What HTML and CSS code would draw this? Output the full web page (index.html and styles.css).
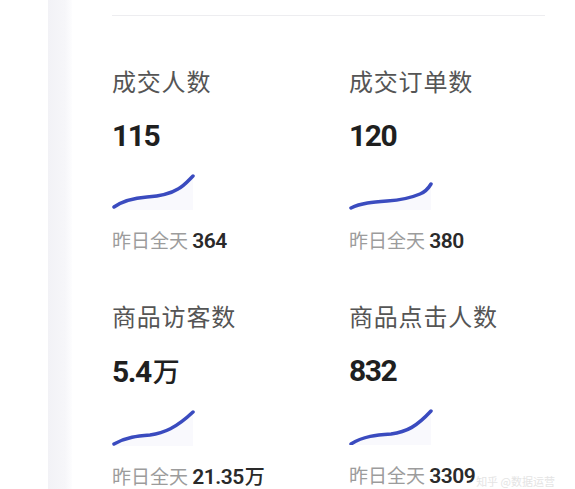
FILE: index.html
```html
<!DOCTYPE html>
<html lang="zh-CN">
<head>
  <meta charset="UTF-8" />
  <meta name="viewport" content="width=device-width, initial-scale=1" />
  <title>数据概览</title>
  <link rel="stylesheet" href="styles.css">
</head>
<body>
  <div class="page">
    <div class="strip"></div>
    <div class="card">
      <div class="divider"></div>

      <div class="grid">
        <div class="metric">
          <div class="label">成交人数</div>
          <div class="value">115</div>
          <svg class="spark" width="84" height="38" viewBox="0 0 84 38">
            <path class="area" d="M2 35 C12 28 22 26 35 25 C48 24 58 22 66 17 C72 14 76 9 81 4 L81 38 L2 38 Z"/>
            <path class="line" d="M2 35 C12 28 22 26 35 25 C48 24 58 22 66 17 C72 14 76 9 81 4"/>
          </svg>
          <div class="footer">昨日全天 <b>364</b></div>
        </div>

        <div class="metric">
          <div class="label">成交订单数</div>
          <div class="value">120</div>
          <svg class="spark" width="84" height="38" viewBox="0 0 84 38">
            <path class="area" d="M2 36 C12 31 24 30 38 29 C52 28 64 25 71 22 C76 20 79 17 82 12 L82 38 L2 38 Z"/>
            <path class="line" d="M2 36 C12 31 24 30 38 29 C52 28 64 25 71 22 C76 20 79 17 82 12"/>
          </svg>
          <div class="footer">昨日全天 <b>380</b></div>
        </div>

        <div class="metric">
          <div class="label">商品访客数</div>
          <div class="value">5.4<span class="unit">万</span></div>
          <svg class="spark" width="84" height="38" viewBox="0 0 84 38">
            <path class="area" d="M2 36 C14 29 26 28 38 27 C52 25 64 20 81 4 L81 38 L2 38 Z"/>
            <path class="line" d="M2 36 C14 29 26 28 38 27 C52 25 64 20 81 4"/>
          </svg>
          <div class="footer">昨日全天 <b>21.35<span class="unit">万</span></b></div>
        </div>

        <div class="metric">
          <div class="label">商品点击人数</div>
          <div class="value">832</div>
          <svg class="spark" width="84" height="38" viewBox="0 0 84 38">
            <path class="area" d="M2 37 C14 29 28 28 42 27 C58 25 68 19 82 4 L82 38 L2 38 Z"/>
            <path class="line" d="M2 37 C14 29 28 28 42 27 C58 25 68 19 82 4"/>
          </svg>
          <div class="footer">昨日全天 <b>3309</b></div>
        </div>
      </div>

      <div class="watermark">知乎 @数据运营</div>
    </div>
  </div>
</body>
</html>
```

FILE: styles.css
```css
body {
  margin: 0;
  background: #fff;
  font-family: "Noto Sans CJK SC", "Noto Sans", sans-serif;
  overflow: hidden;
}
.page {
  display: flex;
  height: 489px;
}
.strip {
  flex-shrink: 0;
  width: 24px;
  margin-left: 48px;
  background: linear-gradient(to right, #f2f2f6, #f6f6f9 70%, #fdfdfe);
}
.card {
  flex: 1;
  min-width: 0;
  padding: 0 30px 0 40px;
  position: relative;
}
.divider {
  margin-top: 15px;
  border-top: 1px solid #ededf0;
}
.grid {
  display: grid;
  grid-template-columns: 237px 1fr;
  row-gap: 45px;
  margin-top: 48px;
}
.metric {
  display: flex;
  flex-direction: column;
  align-items: flex-start;
}
.label {
  font-size: 24px;
  line-height: 34px;
  color: #555;
  letter-spacing: 0.8px;
}
.value {
  margin-top: 20px;
  font-family: Roboto, "Noto Sans CJK SC", sans-serif;
  font-size: 30px;
  line-height: 36px;
  font-weight: 700;
  color: #1f1f1f;
  letter-spacing: -1.5px;
}
.value .unit {
  font-family: "Noto Sans CJK SC", sans-serif;
  font-weight: 500;
  font-size: 27px;
  margin-left: 2px;
}
.spark {
  display: block;
  margin-top: 18px;
}
.spark .line {
  fill: none;
  stroke: #3a4bbf;
  stroke-width: 3.5;
  stroke-linecap: round;
}
.spark .area {
  fill: #f3f4fb;
  opacity: 0.5;
}
.footer {
  margin-top: 17px;
  font-size: 19px;
  line-height: 26px;
  color: #9c9c9c;
}
.footer b {
  font-family: Roboto, "Noto Sans CJK SC", sans-serif;
  font-size: 21px;
  font-weight: 600;
  color: #2a2a2a;
  letter-spacing: -0.5px;
}
.footer .unit {
  font-family: "Noto Sans CJK SC", sans-serif;
  font-weight: 500;
  font-size: 20px;
  margin-left: 1px;
}
.watermark {
  position: absolute;
  right: 20px;
  bottom: 1px;
  font-size: 11px;
  line-height: 13px;
  color: #e4e4e4;
}
```
